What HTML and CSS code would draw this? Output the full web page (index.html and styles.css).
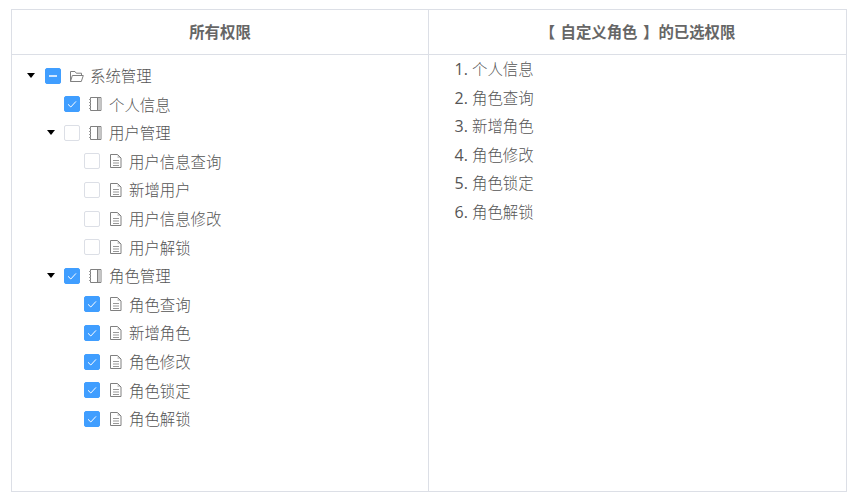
FILE: index.html
```html
<!DOCTYPE html>
<html lang="zh-CN">
<head>
    <meta charset="UTF-8">
    <meta name="viewport" content="width=device-width, initial-scale=1.0">
    <title>角色权限</title>
    <link rel="stylesheet" href="styles.css">
</head>
<body>
    <svg class="defs" width="0" height="0">
        <symbol id="ic-folder" viewBox="0 0 16 16">
            <path d="M2.500 13.500V3.500h4.500l1.300 1.700h5.200v2.300M2.500 13.500l1.800-6h11l-2 6z" fill="none" stroke="currentColor" stroke-width="1"/>
        </symbol>
        <symbol id="ic-book" viewBox="0 0 16 16">
            <path d="M3.500 1.500h10.500v13H3.500z" fill="none" stroke="currentColor" stroke-width="1"/>
            <path d="M10.500 2h3v12h-3z" fill="#c8c8c8"/>
            <path d="M10.500 1.500v13" stroke="currentColor" stroke-width="1"/>
            <path d="M2 3.500h2M2 6.500h2M2 9.500h2M2 12.500h2" stroke="#999" stroke-width="1"/>
        </symbol>
        <symbol id="ic-file" viewBox="0 0 16 16">
            <path d="M10.500 1.500v3.500h3.500z" fill="#ccc"/>
            <path d="M3.500 1.500h7l3.500 3.500v9.500H3.500z" fill="none" stroke="currentColor" stroke-width="1"/>
            <path d="M6 7.500h6M6 10h6M6 12.500h6" fill="none" stroke="#999" stroke-width="1"/>
        </symbol>
    </svg>

    <div class="panel">
        <div class="col col-left">
            <div class="col-head">所有权限</div>
            <div class="tree">
                <div class="row lv0">
                    <span class="caret"></span>
                    <span class="box half"><i></i></span>
                    <svg class="ic"><use href="#ic-folder"/></svg>
                    <span class="txt">系统管理</span>
                </div>
                <div class="row lv1">
                    <span class="caret none"></span>
                    <span class="box on"><svg viewBox="0 0 16 16"><path d="M4 8.300l2.800 2.700 5.200-5.600"/></svg></span>
                    <svg class="ic"><use href="#ic-book"/></svg>
                    <span class="txt">个人信息</span>
                </div>
                <div class="row lv1">
                    <span class="caret"></span>
                    <span class="box"></span>
                    <svg class="ic"><use href="#ic-book"/></svg>
                    <span class="txt">用户管理</span>
                </div>
                <div class="row lv2">
                    <span class="caret none"></span>
                    <span class="box"></span>
                    <svg class="ic"><use href="#ic-file"/></svg>
                    <span class="txt">用户信息查询</span>
                </div>
                <div class="row lv2">
                    <span class="caret none"></span>
                    <span class="box"></span>
                    <svg class="ic"><use href="#ic-file"/></svg>
                    <span class="txt">新增用户</span>
                </div>
                <div class="row lv2">
                    <span class="caret none"></span>
                    <span class="box"></span>
                    <svg class="ic"><use href="#ic-file"/></svg>
                    <span class="txt">用户信息修改</span>
                </div>
                <div class="row lv2">
                    <span class="caret none"></span>
                    <span class="box"></span>
                    <svg class="ic"><use href="#ic-file"/></svg>
                    <span class="txt">用户解锁</span>
                </div>
                <div class="row lv1">
                    <span class="caret"></span>
                    <span class="box on"><svg viewBox="0 0 16 16"><path d="M4 8.300l2.800 2.700 5.200-5.600"/></svg></span>
                    <svg class="ic"><use href="#ic-book"/></svg>
                    <span class="txt">角色管理</span>
                </div>
                <div class="row lv2">
                    <span class="caret none"></span>
                    <span class="box on"><svg viewBox="0 0 16 16"><path d="M4 8.300l2.800 2.700 5.200-5.600"/></svg></span>
                    <svg class="ic"><use href="#ic-file"/></svg>
                    <span class="txt">角色查询</span>
                </div>
                <div class="row lv2">
                    <span class="caret none"></span>
                    <span class="box on"><svg viewBox="0 0 16 16"><path d="M4 8.300l2.800 2.700 5.200-5.600"/></svg></span>
                    <svg class="ic"><use href="#ic-file"/></svg>
                    <span class="txt">新增角色</span>
                </div>
                <div class="row lv2">
                    <span class="caret none"></span>
                    <span class="box on"><svg viewBox="0 0 16 16"><path d="M4 8.300l2.800 2.700 5.200-5.600"/></svg></span>
                    <svg class="ic"><use href="#ic-file"/></svg>
                    <span class="txt">角色修改</span>
                </div>
                <div class="row lv2">
                    <span class="caret none"></span>
                    <span class="box on"><svg viewBox="0 0 16 16"><path d="M4 8.300l2.800 2.700 5.200-5.600"/></svg></span>
                    <svg class="ic"><use href="#ic-file"/></svg>
                    <span class="txt">角色锁定</span>
                </div>
                <div class="row lv2">
                    <span class="caret none"></span>
                    <span class="box on"><svg viewBox="0 0 16 16"><path d="M4 8.300l2.800 2.700 5.200-5.600"/></svg></span>
                    <svg class="ic"><use href="#ic-file"/></svg>
                    <span class="txt">角色解锁</span>
                </div>
            </div>
        </div>
        <div class="col">
            <div class="col-head head-wide">【 自定义角色 】的已选权限</div>
            <ol class="picked">
                <li>个人信息</li>
                <li>角色查询</li>
                <li>新增角色</li>
                <li>角色修改</li>
                <li>角色锁定</li>
                <li>角色解锁</li>
            </ol>
        </div>
    </div>
</body>
</html>
```

FILE: styles.css
```css
body {
    margin: 0;
    font-family: "Noto Sans CJK SC", "Noto Sans", sans-serif;
    font-size: 15.4px;
    font-weight: 300;
    color: #555;
    background: #fff;
}
.defs {
    position: absolute;
}
.panel {
    display: flex;
    width: 836px;
    height: 483px;
    margin: 9px 0 0 11px;
    box-sizing: border-box;
    border: 1px solid #dcdfe6;
}
.col {
    flex: 1;
}
.col-left {
    flex: none;
    width: 416px;
    border-right: 1px solid #dcdfe6;
}
.col-head {
    height: 44px;
    line-height: 43px;
    text-align: center;
    font-weight: bold;
    color: #666;
    border-bottom: 1px solid #dcdfe6;
}
.head-wide {
    word-spacing: 2px;
}
.tree {
    padding-top: 6.4px;
}
.row {
    display: flex;
    align-items: center;
    height: 28.6px;
}
.lv0 { padding-left: 13px; }
.lv1 { padding-left: 33px; }
.lv2 { padding-left: 52px; }
.caret {
    width: 0;
    height: 0;
    margin: 0 5px 0 2px;
    border-style: solid;
    border-width: 5px 4px 0;
    border-color: #000 transparent transparent;
}
.caret.none {
    border-color: transparent;
}
.box {
    flex: none;
    display: flex;
    align-items: center;
    justify-content: center;
    box-sizing: border-box;
    width: 16px;
    height: 16px;
    margin-left: 5px;
    border: 1px solid #dcdfe6;
    border-radius: 2px;
    background: #fff;
}
.lv1 .box {
    margin-left: 4px;
}
.box.on, .box.half {
    background: #409eff;
    border-color: #409eff;
}
.box i {
    width: 8px;
    height: 2px;
    background: #cfe6ff;
}
.box svg {
    width: 16px;
    height: 16px;
    flex: none;
}
.box path {
    fill: none;
    stroke: #fff;
    stroke-width: 1;
}
.ic {
    flex: none;
    width: 16px;
    height: 16px;
    margin-left: 7px;
    color: #808080;
}
.txt {
    margin-left: 6px;
    line-height: 1;
}
.picked {
    margin: -1px 0 0;
    padding: 0 0 0 43px;
}
.picked li {
    height: 28.6px;
    line-height: 28.6px;
}
.picked li::marker {
    font-family: "Open Sans", sans-serif;
    font-size: 16px;
    font-weight: 400;
}
```
